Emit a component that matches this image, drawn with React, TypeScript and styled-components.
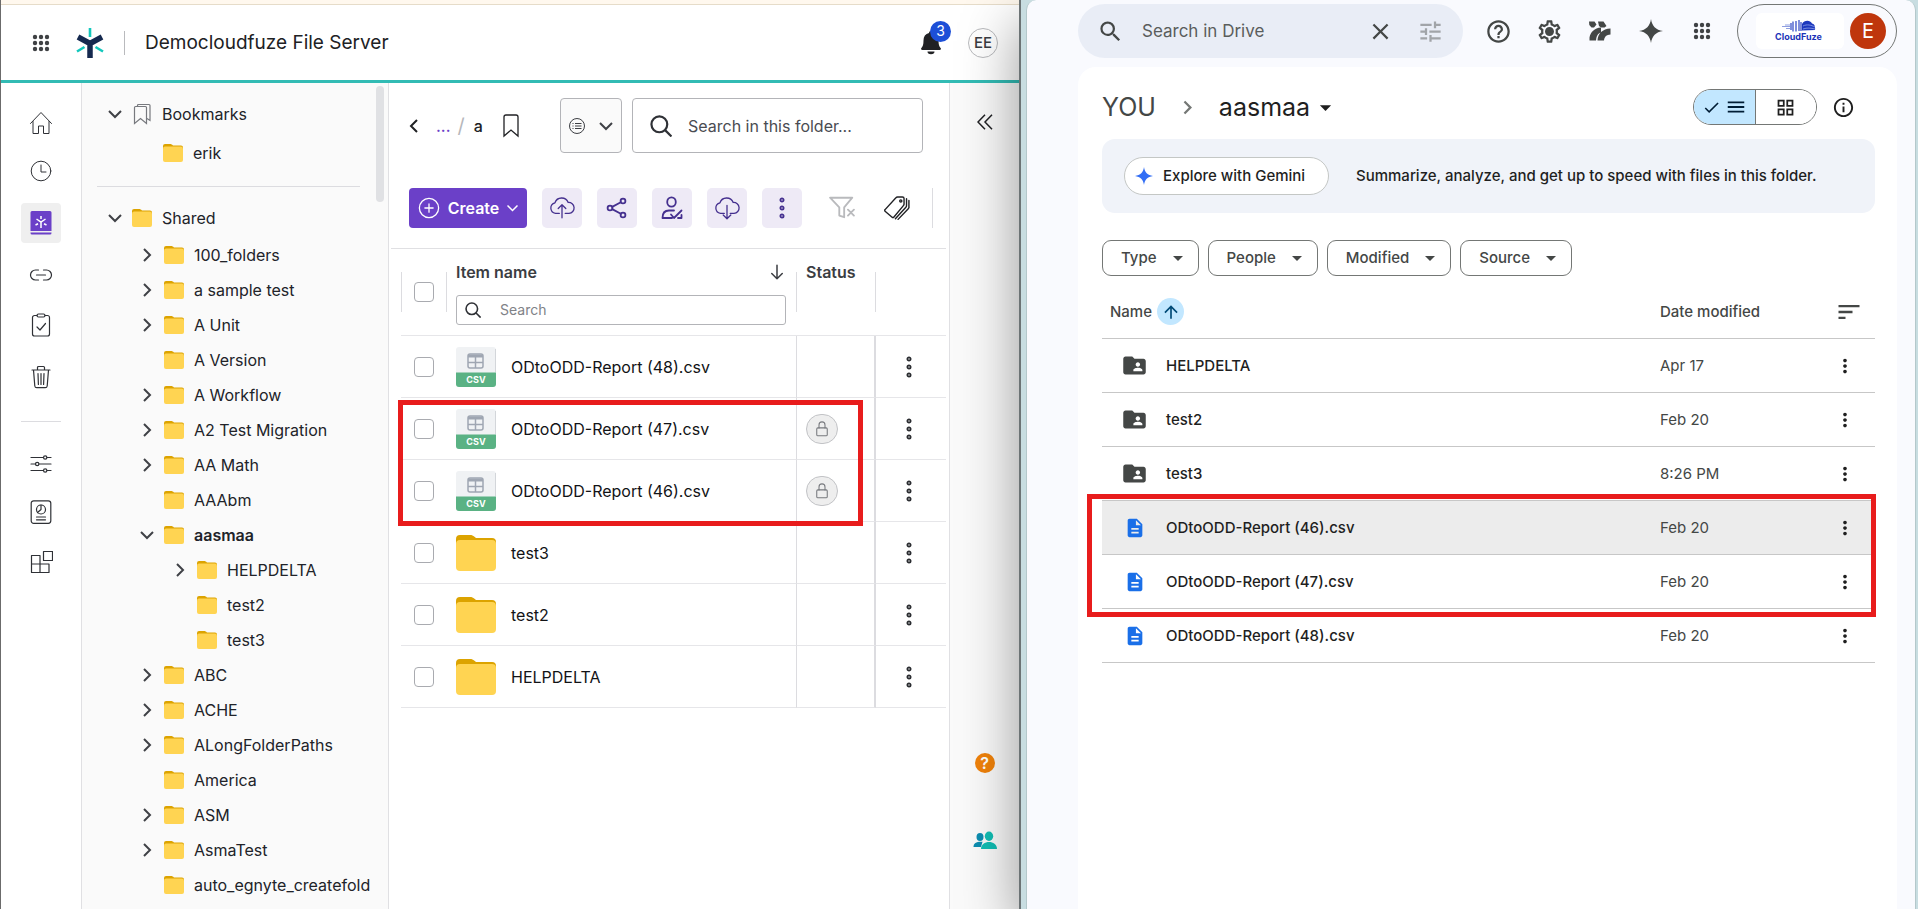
import React from 'react';
import styled, { createGlobalStyle, css } from 'styled-components';
import {
  MdArrowDropDown,
  MdArrowUpward,
  MdCheck,
  MdChevronRight,
  MdClose,
  MdDescription,
  MdFolderShared,
  MdHelpOutline,
  MdInfoOutline,
  MdMenu,
  MdMoreVert,
  MdOutlineGridView,
  MdOutlineSettings,
  MdSearch,
  MdSort,
  MdTune,
} from 'react-icons/md';

const Global = createGlobalStyle`
  * { box-sizing: border-box; }
  body { margin: 0; overflow: hidden; background: #c8dde1; }
  button, input { font: inherit; color: inherit; }
  button { border: 0; padding: 0; background: none; cursor: pointer; }
  h1, h2, p, ul { margin: 0; padding: 0; font-weight: inherit; }
  svg { display: block; flex: none; }
`;

const Desktop = styled.div`
  display: grid;
  grid-template-columns: 1019fr 899fr;
  height: 100vh;
`;

/* ---------- shared parts ---------- */

const IconButton = styled.button<{ $muted?: boolean }>`
  display: grid;
  place-items: center;
  color: ${(p) => (p.$muted ? '#a1a4a8' : 'inherit')};
`;

const Marker = styled.div`
  position: absolute;
  border: 5px solid #e81c1c;
  pointer-events: none;
`;

/* ---------- file server window ---------- */

const ServerWindow = styled.section`
  display: flex;
  flex-direction: column;
  min-width: 0;
  min-height: 0;
  border-left: 1px solid #6b6b6b;
  background: #fff;
  color: #212329;
  font-family: Inter, 'Liberation Sans', sans-serif;
  font-size: 16px;
  line-height: 20px;
`;

const NoticeStrip = styled.div`
  flex: none;
  height: 5px;
  background: #fff8ee;
  border-bottom: 1px solid #e6dcc9;
`;

const ServerHeader = styled.header`
  flex: none;
  display: flex;
  align-items: center;
  height: 78px;
  padding: 0 21px 0 31px;
  border-bottom: 3px solid #32bbb4;
`;

const HeaderRule = styled.span`
  width: 1px;
  height: 24px;
  margin: 0 20px;
  background: #b9babd;
`;

const ServerTitle = styled.h1`
  flex: 1;
  font-size: 19px;
  line-height: 24px;
  font-weight: 400;
  color: #202124;
`;

const LogoLink = styled.a`
  margin-left: 26px;
`;

const BellButton = styled.button`
  position: relative;
  width: 20px;
  height: 24px;
  margin-right: 27px;
`;

const Badge = styled.span`
  position: absolute;
  left: 9px;
  top: -10px;
  width: 21px;
  height: 21px;
  border-radius: 50%;
  background: #1d4fd7;
  color: #fff;
  font-size: 14px;
  line-height: 20px;
  text-align: center;
`;

const UserButton = styled.button`
  width: 30px;
  height: 30px;
  border: 1px solid #b9babd;
  border-radius: 50%;
  font-size: 15px;
  font-weight: 500;
  line-height: 28px;
  color: #3b3d42;
`;

const ServerBody = styled.div`
  flex: 1;
  display: flex;
  min-height: 0;
`;

const Rail = styled.nav`
  flex: none;
  width: 81px;
  padding-top: 17px;
  display: flex;
  flex-direction: column;
  align-items: center;
  border-right: 1px solid #e0e0e3;
`;

const RailSlot = styled.div<{ $h: number }>`
  flex: none;
  height: ${(p) => p.$h}px;
  display: flex;
  align-items: center;
`;

const RailButton = styled.button<{ $active?: boolean }>`
  display: grid;
  place-items: center;
  width: 40px;
  height: 40px;
  border-radius: 4px;
  background: ${(p) => (p.$active ? '#efefef' : 'transparent')};
  color: #2f3136;
`;

const RailRule = styled.span`
  width: 40px;
  height: 1px;
  background: #dcdce0;
`;

const Tree = styled.aside`
  position: relative;
  flex: none;
  width: 307px;
  padding-top: 8px;
  overflow: hidden;
  background: #fafafa;
  border-right: 1px solid #e0e0e3;
`;

const TreeList = styled.ul`
  list-style: none;
`;

const TreeRow = styled.li<{ $indent: number; $h?: number; $bold?: boolean }>`
  display: flex;
  align-items: center;
  height: ${(p) => p.$h ?? 35}px;
  padding-left: ${(p) => p.$indent}px;
  white-space: nowrap;
  font-weight: ${(p) => (p.$bold ? 600 : 400)};
`;

const Toggle = styled.span`
  flex: none;
  display: grid;
  place-items: center;
  width: 26px;
  margin-right: 4px;
`;

const TreeLink = styled.a`
  display: flex;
  align-items: center;
  gap: 10px;
  color: inherit;
  text-decoration: none;
`;

const TreeRule = styled.div`
  height: 1px;
  margin: 17px 28px 12px 15px;
  background: #dcdce0;
`;

const ScrollThumb = styled.span`
  position: absolute;
  right: 4px;
  top: 3px;
  width: 8px;
  height: 116px;
  border-radius: 4px;
  background: #e0e1e4;
`;

const Content = styled.main`
  flex: 1;
  min-width: 0;
  padding: 15px 3px 0 2px;
  background: #fff;
`;

const PathBar = styled.div`
  display: flex;
  align-items: center;
  height: 55px;
  padding: 0 23px 0 18px;
`;

const Crumb = styled.a`
  font-weight: 500;
  color: #202124;
  text-decoration: none;
`;

const MoreCrumb = styled(Crumb)`
  margin-left: 17px;
  color: #6b40c8;
`;

const Slash = styled.span`
  margin: 0 9px 0 7px;
  font-size: 20px;
  color: #b6b7bb;
`;

const BookmarkButton = styled.button`
  margin-left: 20px;
`;

const ScopeButton = styled.button`
  flex: none;
  display: flex;
  align-items: center;
  justify-content: center;
  gap: 14px;
  width: 62px;
  height: 55px;
  margin: 0 10px 0 auto;
  border: 1px solid #b3b4b8;
  border-radius: 4px;
  background: #fafafa;
  color: #3c3e43;
`;

const SearchBox = styled.label<{ $small?: boolean }>`
  display: flex;
  align-items: center;
  min-width: 0;
  border: 1px solid #b3b4b8;
  border-radius: ${(p) => (p.$small ? 3 : 4)}px;
  background: #fff;
  color: #2f3136;
  font-weight: 400;
  ${(p) =>
    p.$small
      ? css`
          height: 30px;
          margin-top: 13px;
          padding-left: 8px;
          gap: 19px;
          font-size: 14px;
        `
      : css`
          flex: 0 1 291px;
          height: 55px;
          padding-left: 17px;
          gap: 16px;
        `}
  input {
    flex: 1;
    width: 0;
    min-width: 0;
    border: 0;
    padding: 0;
    outline: 0;
    background: none;
  }
  input::placeholder {
    color: ${(p) => (p.$small ? '#808287' : '#4a4c52')};
    opacity: 1;
  }
`;

const ToolBar = styled.div`
  display: flex;
  align-items: center;
  gap: 15px;
  margin-top: 35px;
  padding: 0 13px 0 18px;
  height: 40px;
`;

const ToolGroup = styled.div`
  display: flex;
  gap: 15px;
  margin-left: 5px;
`;

const CreateButton = styled.button`
  display: flex;
  align-items: center;
  justify-content: center;
  gap: 8px;
  width: 118px;
  height: 40px;
  border-radius: 4px;
  background: #6b40c8;
  color: #fff;
  font-weight: 600;
`;

const Tile = styled.button<{ $plain?: boolean; $muted?: boolean }>`
  display: grid;
  place-items: center;
  width: 40px;
  height: 40px;
  border-radius: 5px;
  background: ${(p) => (p.$plain ? 'transparent' : '#eeeaf6')};
  color: ${(p) => (p.$muted ? '#b9babd' : p.$plain ? '#202124' : '#45308f')};
`;

const ToolRule = styled.span`
  width: 1px;
  height: 40px;
  margin-left: auto;
  background: #dcdce0;
`;

const TableArea = styled.div`
  position: relative;
  margin-top: 20px;
  border-top: 1px solid #e0e0e3;
  padding-left: 10px;
`;

const ItemTable = styled.table`
  width: 100%;
  table-layout: fixed;
  border-collapse: separate;
  border-spacing: 0;

  th,
  td {
    padding: 0;
    border-bottom: 1px solid #e6e6e9;
    text-align: left;
  }
  th {
    position: relative;
    height: 87px;
    vertical-align: top;
    font-weight: 600;
    color: #3b3d42;
  }
  th:not(:last-child)::after,
  th:first-child::before {
    content: '';
    position: absolute;
    top: 23px;
    right: 0;
    width: 1px;
    height: 40px;
    background: #dcdce0;
  }
  th:first-child::before {
    right: auto;
    left: 0;
  }
  td {
    height: 62px;
    color: #121316;
  }
  td:nth-child(2) {
    border-right: 1px solid #dcdce0;
  }
  td:nth-child(3) {
    border-right: 2px solid #dcdce0;
  }
`;

const Check = styled.input<{ $head?: boolean }>`
  appearance: none;
  display: block;
  width: 20px;
  height: 20px;
  margin: ${(p) => (p.$head ? '33px 0 0 13px' : '0 0 0 13px')};
  border: 1px solid #a9abb0;
  border-radius: 4px;
  background: #fff;
`;

const NameHead = styled.div`
  padding: 13px 11px 0 9px;
`;

const HeadLine = styled.div`
  display: flex;
  align-items: center;
  justify-content: space-between;
`;

const StatusHead = styled.div`
  padding: 13px 0 0 9px;
`;

const ItemName = styled.a`
  display: flex;
  align-items: center;
  gap: 15px;
  padding-left: 9px;
  color: inherit;
  text-decoration: none;
`;

const LockBadge = styled.span`
  display: grid;
  place-items: center;
  width: 32px;
  height: 30px;
  margin-left: 9px;
  border: 1px solid #c2c3c6;
  border-radius: 16px;
  background: #eee;
  color: #77797e;
`;

const RowMenu = styled.button`
  display: grid;
  place-items: center;
  width: 24px;
  height: 32px;
  margin-left: 21px;
  color: #2a2c30;
`;

const ItemMarker = styled(Marker)`
  top: 151px;
  left: 7px;
  right: 83px;
  height: 126px;
`;

const SideRail = styled.aside`
  flex: none;
  display: flex;
  flex-direction: column;
  align-items: center;
  width: 70px;
  padding-top: 31px;
  overflow: hidden;
  background: #fafafa;
  border-left: 1px solid #e0e0e3;
`;

const SideTools = styled.div`
  display: flex;
  flex-direction: column;
  align-items: center;
  gap: 58px;
  margin: auto 0 -20px;
`;

const HelpButton = styled.button`
  width: 20px;
  height: 20px;
  border-radius: 50%;
  background: #f0820a;
  color: #fff;
  font-size: 16px;
  font-weight: 600;
  line-height: 20px;
`;

/* ---------- drive window ---------- */

const DriveFrame = styled.section`
  position: relative;
  min-width: 0;
  min-height: 0;
  display: flex;
  padding: 0 2px 0 5px;
  border-left: 2px solid #6c7375;
  background: #c8dde1;
  box-shadow: 0 22px 54px rgba(0, 0, 0, 0.4);
`;

const DriveWindow = styled.div`
  flex: 1;
  min-width: 0;
  display: flex;
  flex-direction: column;
  padding: 4px 18px 0 51px;
  border: 1px solid #b4c8cb;
  border-width: 0 1px;
  border-radius: 10px 10px 0 0;
  background: #f9fafe;
  color: #1f1f1f;
  font-family: Inter, 'Open Sans', sans-serif;
  font-size: 15px;
  line-height: 24px;
`;

const DriveHeader = styled.header`
  flex: none;
  display: flex;
  align-items: center;
  height: 54px;
  color: #444746;
`;

const DriveSearch = styled.label`
  flex: 0 1 385px;
  min-width: 0;
  display: flex;
  align-items: center;
  height: 54px;
  padding: 0 19px;
  border-radius: 27px;
  background: #e9edf6;
  font-size: 17px;
  color: #444746;

  input {
    flex: 1;
    min-width: 0;
    padding: 0;
    margin-left: 18px;
    border: 0;
    outline: 0;
    background: none;
  }
  input::placeholder {
    color: #5a5d5c;
    opacity: 1;
  }
`;

const SearchActions = styled.span`
  display: flex;
  gap: 23px;
`;

const HeaderIcons = styled.div`
  display: grid;
  grid-template-columns: repeat(5, 27px);
  align-items: center;
  gap: 24px;
  margin: 0 auto;
`;

const AccountPill = styled.button`
  flex: none;
  display: flex;
  align-items: center;
  justify-content: flex-end;
  gap: 6px;
  width: 160px;
  height: 54px;
  padding-right: 10px;
  border: 1px solid #747775;
  border-radius: 27px;
`;

const OrgTile = styled.span`
  display: flex;
  flex-direction: column;
  align-items: center;
  width: 88px;
  height: 36px;
  padding-top: 7px;
  padding-right: 3px;
  border-radius: 6px;
  background: #fff;
  color: #1a33b8;
  font-size: 9px;
  line-height: 10px;
  font-weight: 700;
`;

const Avatar = styled.span`
  width: 36px;
  height: 36px;
  border-radius: 50%;
  background: #bf360c;
  color: #fff;
  font-size: 20px;
  line-height: 36px;
`;

const Panel = styled.main`
  flex: 1;
  min-height: 0;
  margin-top: 9px;
  padding: 20px 22px 0 24px;
  border-radius: 18px 18px 0 0;
  background: #fff;
`;

const PanelTop = styled.div`
  display: flex;
  align-items: center;
  height: 40px;
`;

const Trail = styled.h2`
  flex: 1;
  display: flex;
  align-items: center;
  font-size: 25px;
  line-height: 36px;
  color: #444746;

  a {
    color: inherit;
    text-decoration: none;
  }
`;

const TrailArrow = styled.span`
  margin: 0 18px;
  color: #747775;
`;

const Current = styled.button`
  display: flex;
  align-items: center;
  gap: 2px;
  color: #1f1f1f;
`;

const ViewSwitch = styled.div`
  display: flex;
  width: 124px;
  height: 36px;
  margin-right: 15px;
  border: 1px solid #747775;
  border-radius: 18px;
  overflow: hidden;
`;

const ViewButton = styled.button<{ $on?: boolean }>`
  flex: 1;
  display: flex;
  align-items: center;
  justify-content: center;
  gap: 4px;
  background: ${(p) => (p.$on ? '#c2e7ff' : '#fff')};
  color: ${(p) => (p.$on ? '#001d35' : '#1f1f1f')};
  border-right: ${(p) => (p.$on ? '1px solid #747775' : '0')};
`;

const InfoButton = styled(IconButton)`
  margin-right: 20px;
  color: #1f1f1f;
`;

const Banner = styled.div`
  display: flex;
  align-items: center;
  gap: 27px;
  height: 74px;
  margin-top: 12px;
  padding-left: 22px;
  border-radius: 13px;
  background: #f0f3f9;
  font-weight: 500;
  white-space: nowrap;
`;

const GeminiButton = styled.button`
  display: flex;
  align-items: center;
  gap: 10px;
  width: 205px;
  height: 38px;
  padding-left: 10px;
  border: 1px solid #c4c7c5;
  border-radius: 19px;
  background: #fff;
`;

const Chips = styled.div`
  display: flex;
  gap: 9px;
  margin-top: 27px;
`;

const Chip = styled.button`
  display: flex;
  align-items: center;
  gap: 9px;
  height: 36px;
  padding: 0 8px 0 18px;
  border: 1px solid #747775;
  border-radius: 9px;
  color: #444746;
  font-weight: 500;
`;

const ListArea = styled.div`
  position: relative;
  margin-top: 9px;
`;

const DriveTable = styled.table`
  width: 100%;
  table-layout: fixed;
  border-collapse: separate;
  border-spacing: 0;

  th,
  td {
    height: 54px;
    padding: 0;
    border-bottom: 1px solid #c7c7c7;
    text-align: left;
    font-weight: 400;
    color: #444746;
  }
  th {
    font-weight: 500;
  }
`;

const DriveRow = styled.tr<{ $hover?: boolean }>`
  background: ${(p) => (p.$hover ? '#ececec' : 'transparent')};
`;

const SortName = styled.button`
  display: flex;
  align-items: center;
  gap: 5px;
  padding-left: 8px;
  font-weight: 500;
`;

const SortDot = styled.span`
  display: grid;
  place-items: center;
  width: 27px;
  height: 27px;
  border-radius: 50%;
  background: #c2e7ff;
  color: #004a77;
`;

const DriveName = styled.a`
  display: flex;
  align-items: center;
  gap: 18px;
  padding-left: 19px;
  color: #1f1f1f;
  font-weight: 500;
  text-decoration: none;
`;

const FileSlot = styled.span<{ $doc?: boolean }>`
  display: grid;
  place-items: center;
  width: 27px;
  color: ${(p) => (p.$doc ? '#1a6fe8' : '#444746')};
`;

const EndButton = styled(IconButton)`
  width: 27px;
  margin-left: 14px;
  color: #1f1f1f;
`;

const SortButton = styled(EndButton)`
  margin-left: 18px;
  color: #444746;
`;

const FileMarker = styled(Marker)`
  top: 209px;
  left: -15px;
  right: -1px;
  height: 123px;
`;

/* ---------- drawings ---------- */

type StrokeProps = { size?: number; w?: number; children: React.ReactNode };

const Stroke = ({ size = 24, w = 1, children }: StrokeProps) => (
  <svg
    width={size}
    height={size}
    viewBox="0 0 24 24"
    fill="none"
    stroke="currentColor"
    strokeWidth={w}
    strokeLinecap="round"
    strokeLinejoin="round"
    aria-hidden
  >
    {children}
  </svg>
);

const Chevron = ({ open }: { open: boolean }) => (
  <svg width="14" height="14" viewBox="0 0 14 14" fill="none" stroke="#3f4146" strokeWidth="2" aria-hidden>
    <path d={open ? 'M1 4l6 6 6-6' : 'M4 1l6 6-6 6'} />
  </svg>
);

const FolderIcon = ({ width, height }: { width: number; height: number }) => (
  <svg width={width} height={height} viewBox="0 0 40 36" preserveAspectRatio="none" aria-hidden>
    <path d="M0 4a4 4 0 0 1 4-4h10c2 0 3 .6 4.500 1.700L20 3h16a4 4 0 0 1 4 4v10H0z" fill="#dca300" />
    <path d="M0 9a4 4 0 0 1 4-4h32a4 4 0 0 1 4 4v23a4 4 0 0 1-4 4H4a4 4 0 0 1-4-4z" fill="#ffd452" />
  </svg>
);

const CsvIcon = () => (
  <svg width="40" height="40" viewBox="0 0 40 40" aria-hidden>
    <rect width="40" height="40" rx="3" fill="#f0f2f4" />
    <path d="M39.500 2v23" stroke="#d3d6da" />
    <path d="M0 25.500h40V37a3 3 0 0 1-3 3H3a3 3 0 0 1-3-3z" fill="#5ab284" />
    <rect x="12" y="7" width="15" height="14" rx="2" fill="none" stroke="#9fa6b2" strokeWidth="1.500" />
    <path d="M12 7.500h15v3H12z" fill="#9fa6b2" />
    <path d="M12 15.500h15M19.500 10v11" stroke="#9fa6b2" strokeWidth="1.500" />
    <text x="20" y="36" textAnchor="middle" fill="#fff" fontFamily="Inter, sans-serif" fontSize="9" fontWeight="700">
      CSV
    </text>
  </svg>
);

const Dots9 = () => (
  <svg width="18" height="18" viewBox="0 0 18 18" fill="#3f4144" aria-hidden>
    {[3, 9, 15].map((y) => [3, 9, 15].map((x) => <circle key={`${x}-${y}`} cx={x} cy={y} r="2.200" />))}
  </svg>
);

const Rings = () => (
  <svg width="8" height="24" viewBox="0 0 8 24" fill="none" stroke="currentColor" strokeWidth="1.800" aria-hidden>
    {[4, 12, 20].map((y) => (
      <circle key={y} cx="4" cy={y} r="1.600" />
    ))}
  </svg>
);

const Logo = () => (
  <svg width="28" height="32" viewBox="0 0 28 32" fill="none" aria-hidden>
    <path d="M2 10l12 6.500L26 10M14 15v16" stroke="#15294f" strokeWidth="5.500" />
    <path d="M14 1v9M1 24.500l7.500-4.500M27 24.500l-7.500-4.500" stroke="#14c8bd" strokeWidth="2.600" />
  </svg>
);

const Bell = () => (
  <svg width="20" height="24" viewBox="0 0 20 24" fill="#202124" aria-hidden>
    <path d="M10 0c1.200 0 2 .8 2 2 3.600.8 5.500 3.500 5.500 7.500 0 4 .7 6 2.100 7.400.7.800.4 2.100-.8 2.100H1.200c-1.200 0-1.500-1.300-.8-2.100C1.800 15.500 2.500 13.500 2.500 9.500 2.500 5.500 4.400 2.800 8 2c0-1.200.8-2 2-2zM6.500 20.500h7a3.500 2.800 0 0 1-7 0z" />
  </svg>
);

const FilesIcon = () => (
  <svg width="22" height="24" viewBox="0 0 22 24" aria-hidden>
    <path d="M2 0h18a1.500 1.500 0 0 1 1.500 1.500V20H.5V1.500A1.500 1.500 0 0 1 2 0zM.5 21.500h21V22a1.500 1.500 0 0 1-1.500 1.500H2A1.500 1.500 0 0 1 .5 22z" fill="#6b40c8" />
    <path d="M6.500 8l4.500 3 4.500-3M11 11v6M11 5v3M5.500 14l2.500-1.200M16.500 14L14 12.800" stroke="#fff" strokeWidth="1.500" fill="none" />
  </svg>
);

const Magnifier = ({ size }: { size: number }) => (
  <svg width={size} height={size} viewBox="0 0 20 20" fill="none" stroke="currentColor" strokeWidth="2" aria-hidden>
    <circle cx="8.500" cy="8.500" r="7.200" />
    <path d="M13.500 13.500l6 6" />
  </svg>
);

const Cloud = ({ up }: { up: boolean }) => (
  <Stroke size={26} w={1.2}>
    <path d="M9.500 17H6a5 5 0 0 1-.5-9.800 6.500 6.500 0 0 1 12.200-.3A5 5 0 0 1 18.500 17H15" />
    <path d={up ? 'M12 21V9.500M8.500 12.500L12 9l3.500 3.500' : 'M12 9.500V21.500M8.500 18.500l3.500 3.500 3.500-3.500'} />
  </Stroke>
);

const Spark = ({ size, color }: { size: number; color: string }) => (
  <svg width={size} height={size} viewBox="0 0 24 24" fill={color} aria-hidden>
    <path d="M12 0c.9 6.800 4.800 11 12 12-7.200 1-11.100 5.200-12 12-.9-6.800-4.800-11-12-12C7.200 11 11.100 6.800 12 0z" />
  </svg>
);

const StudioIcon = () => (
  <svg width="22" height="20" viewBox="0 0 22 20" fill="#444746" aria-hidden>
    <path d="M0 .5h5.500l2 3L5 6.500H2.500L.3 4zM9 .5h5.500l3 4.500-2 1.500H12L10 5z" />
    <path d="M.5 19.500v-3C1.500 11 5.500 7 12 6.500v5c-3 .8-4.500 3-5 8zM8.500 19.500c.3-7 5-11.500 13-12v6c-4 .2-6 2-6.500 6z" />
  </svg>
);

const CloudMark = () => (
  <svg width="34" height="12" viewBox="0 0 34 12" aria-hidden>
    <path d="M0 6.500h8M3 5h5M4 8.500h4" stroke="#8f9fe0" />
    <path d="M9 3v7M11 1.500v10M14 1v10.500M17 0v11M19 2v9" stroke="#2a43c4" strokeWidth="1.200" />
    <path d="M20 10.500V4c2-4 8-4.500 10-.5 2.500.5 3.500 3 3 6.500z" fill="#1d38bd" />
    <path d="M21 6c4-2 8-1 12 1M21 9c4-1.500 8-1 12 0" stroke="#9fb0f0" strokeWidth=".7" fill="none" />
  </svg>
);

/* ---------- data ---------- */

type RailItem = { label: string; h: number; active?: boolean; icon: React.ReactNode };

const railItems: RailItem[] = [
  {
    label: 'Home',
    h: 46,
    icon: (
      <Stroke>
        <path d="M1.500 12.500L12 1.500l10.500 11M4 10.500V22.500h5.500V15h5v7.500H20V10.500" />
      </Stroke>
    ),
  },
  {
    label: 'Recent',
    h: 50,
    icon: (
      <Stroke>
        <circle cx="12" cy="12" r="9.800" />
        <path d="M12 6v7h5" />
      </Stroke>
    ),
  },
  { label: 'Files', h: 54, active: true, icon: <FilesIcon /> },
  {
    label: 'Links',
    h: 50,
    icon: (
      <Stroke w={1.2}>
        <path d="M9.500 7H6.500a5 5 0 0 0 0 10h3M14.500 7h3a5 5 0 0 1 0 10h-3M7.500 12h9" />
      </Stroke>
    ),
  },
  {
    label: 'Tasks',
    h: 50,
    icon: (
      <Stroke w={1.2}>
        <path d="M8 2.500H5.500a2 2 0 0 0-2 2V21a2 2 0 0 0 2 2h13a2 2 0 0 0 2-2V4.500a2 2 0 0 0-2-2H16" />
        <rect x="8" y="1" width="8" height="3" rx="1.500" />
        <path d="M8 14l3 3 5.500-6.500" />
      </Stroke>
    ),
  },
  {
    label: 'Trash',
    h: 54,
    icon: (
      <Stroke w={1.2}>
        <path d="M3 5h18M8.500 5V2.500a1 1 0 0 1 1-1h5a1 1 0 0 1 1 1V5M4.500 5l1.300 16a2 2 0 0 0 2 1.700h8.400a2 2 0 0 0 2-1.700L19.500 5M9 8.500l.4 11M12 8.500v11M15 8.500l-.4 11" />
      </Stroke>
    ),
  },
];

const railTail: RailItem[] = [
  {
    label: 'Settings',
    h: 52,
    icon: (
      <Stroke w={1.2}>
        <path d="M2 5.500h12.500M18 5.500h4M2 12h4.500M10 12h12M2 18.500h12.500M18 18.500h4" />
        <circle cx="16.200" cy="5.500" r="1.700" />
        <circle cx="8.200" cy="12" r="1.700" />
        <circle cx="16.200" cy="18.500" r="1.700" />
      </Stroke>
    ),
  },
  {
    label: 'Reports',
    h: 44,
    icon: (
      <Stroke w={1.2}>
        <rect x="2.200" y=".8" width="19.600" height="22.500" rx="2.500" />
        <circle cx="12" cy="9.500" r="4.500" />
        <path d="M12 5v4.500l-3.500 3M7.500 17h9M7.500 19.800h9" />
      </Stroke>
    ),
  },
  {
    label: 'Apps',
    h: 56,
    icon: (
      <Stroke w={1.2}>
        <path d="M2.500 5.500h8.500v17H2.500zM2.500 14H20v8.500h-9" />
        <rect x="14.500" y="1.500" width="9" height="9" />
      </Stroke>
    ),
  },
];

type TreeNode = { name: string; level: number; open?: boolean; leaf?: boolean };

const nodes: TreeNode[] = [
  { name: '100_folders', level: 1 },
  { name: 'a sample test', level: 1 },
  { name: 'A Unit', level: 1 },
  { name: 'A Version', level: 1, leaf: true },
  { name: 'A Workflow', level: 1 },
  { name: 'A2 Test Migration', level: 1 },
  { name: 'AA Math', level: 1 },
  { name: 'AAAbm', level: 1, leaf: true },
  { name: 'aasmaa', level: 1, open: true },
  { name: 'HELPDELTA', level: 2 },
  { name: 'test2', level: 2, leaf: true },
  { name: 'test3', level: 2, leaf: true },
  { name: 'ABC', level: 1 },
  { name: 'ACHE', level: 1 },
  { name: 'ALongFolderPaths', level: 1 },
  { name: 'America', level: 1, leaf: true },
  { name: 'ASM', level: 1 },
  { name: 'AsmaTest', level: 1 },
  { name: 'auto_egnyte_createfold', level: 1, leaf: true },
];

const items = [
  { name: 'ODtoODD-Report (48).csv', csv: true, locked: false },
  { name: 'ODtoODD-Report (47).csv', csv: true, locked: true },
  { name: 'ODtoODD-Report (46).csv', csv: true, locked: true },
  { name: 'test3', csv: false, locked: false },
  { name: 'test2', csv: false, locked: false },
  { name: 'HELPDELTA', csv: false, locked: false },
];

const driveItems = [
  { name: 'HELPDELTA', date: 'Apr 17', doc: false },
  { name: 'test2', date: 'Feb 20', doc: false },
  { name: 'test3', date: '8:26 PM', doc: false },
  { name: 'ODtoODD-Report (46).csv', date: 'Feb 20', doc: true, hover: true },
  { name: 'ODtoODD-Report (47).csv', date: 'Feb 20', doc: true },
  { name: 'ODtoODD-Report (48).csv', date: 'Feb 20', doc: true },
];

/* ---------- file server ---------- */

const FolderTree = () => (
  <Tree aria-label="Folders">
    <TreeList>
      <TreeRow $indent={20} $h={46}>
        <Toggle>
          <Chevron open />
        </Toggle>
        <TreeLink href="#bookmarks">
          <svg width="20" height="22" viewBox="0 0 20 22" fill="none" stroke="#77797e" strokeWidth="1.200" aria-hidden>
            <path d="M2.500 20.500V4.500a1 1 0 0 1 1-1h10a1 1 0 0 1 1 1v16l-6-5z" />
            <path d="M5.500 3.500v-1a1 1 0 0 1 1-1H17a1 1 0 0 1 1 1v15l-3-2" />
          </svg>
          Bookmarks
        </TreeLink>
      </TreeRow>
      <TreeRow $indent={81} $h={32}>
        <TreeLink href="#erik">
          <FolderIcon width={20} height={18} />
          erik
        </TreeLink>
      </TreeRow>
    </TreeList>
    <TreeRule />
    <TreeList>
      <TreeRow $indent={20} $h={38}>
        <Toggle>
          <Chevron open />
        </Toggle>
        <TreeLink href="#shared">
          <FolderIcon width={20} height={18} />
          Shared
        </TreeLink>
      </TreeRow>
      {nodes.map((n) => (
        <TreeRow key={n.name} $indent={n.level === 1 ? 52 : 85} $bold={n.open}>
          <Toggle>{!n.leaf && <Chevron open={!!n.open} />}</Toggle>
          <TreeLink href={`#${n.name}`}>
            <FolderIcon width={20} height={18} />
            {n.name}
          </TreeLink>
        </TreeRow>
      ))}
    </TreeList>
    <ScrollThumb />
  </Tree>
);

const ItemList = () => (
  <TableArea>
    <ItemTable>
      <colgroup>
        <col width="46" />
        <col />
        <col width="79" />
        <col width="70" />
      </colgroup>
      <thead>
        <tr>
          <th>
            <Check type="checkbox" $head aria-label="Select all" />
          </th>
          <th>
            <NameHead>
              <HeadLine>
                Item name
                <Stroke size={18} w={2}>
                  <path d="M12 3v18M5 14l7 7 7-7" />
                </Stroke>
              </HeadLine>
              <SearchBox $small>
                <Magnifier size={16} />
                <input type="text" placeholder="Search" aria-label="Search" />
              </SearchBox>
            </NameHead>
          </th>
          <th>
            <StatusHead>Status</StatusHead>
          </th>
          <th aria-label="Actions" />
        </tr>
      </thead>
      <tbody>
        {items.map((it) => (
          <tr key={it.name}>
            <td>
              <Check type="checkbox" aria-label={it.name} />
            </td>
            <td>
              <ItemName href="#item">
                {it.csv ? <CsvIcon /> : <FolderIcon width={40} height={36} />}
                {it.name}
              </ItemName>
            </td>
            <td>
              {it.locked && (
                <LockBadge>
                  <Stroke size={18} w={1.4}>
                    <rect x="5" y="10.500" width="14" height="10.500" rx="1.500" />
                    <path d="M8 10.500V6.500a4 4 0 0 1 8 0v4" />
                  </Stroke>
                </LockBadge>
              )}
            </td>
            <td>
              <RowMenu aria-label="More actions">
                <Rings />
              </RowMenu>
            </td>
          </tr>
        ))}
      </tbody>
    </ItemTable>
    <ItemMarker />
  </TableArea>
);

const FileServer = () => (
  <ServerWindow>
    <NoticeStrip />
    <ServerHeader>
      <IconButton aria-label="Applications">
        <Dots9 />
      </IconButton>
      <LogoLink href="#home" aria-label="Home">
        <Logo />
      </LogoLink>
      <HeaderRule />
      <ServerTitle>Democloudfuze File Server</ServerTitle>
      <BellButton aria-label="Notifications">
        <Bell />
        <Badge>3</Badge>
      </BellButton>
      <UserButton>EE</UserButton>
    </ServerHeader>
    <ServerBody>
      <Rail aria-label="Main">
        {railItems.map((r) => (
          <RailSlot key={r.label} $h={r.h}>
            <RailButton $active={r.active} aria-label={r.label}>
              {r.icon}
            </RailButton>
          </RailSlot>
        ))}
        <RailSlot $h={34}>
          <RailRule />
        </RailSlot>
        {railTail.map((r) => (
          <RailSlot key={r.label} $h={r.h}>
            <RailButton aria-label={r.label}>{r.icon}</RailButton>
          </RailSlot>
        ))}
      </Rail>
      <FolderTree />
      <Content>
        <PathBar>
          <IconButton aria-label="Back">
            <svg width="10" height="14" viewBox="0 0 10 14" fill="none" stroke="#202124" strokeWidth="2" aria-hidden>
              <path d="M8 1L2 7l6 6" />
            </svg>
          </IconButton>
          <MoreCrumb href="#parents">...</MoreCrumb>
          <Slash>/</Slash>
          <Crumb href="#aasmaa">a</Crumb>
          <BookmarkButton aria-label="Bookmark">
            <svg width="16" height="24" viewBox="0 0 16 24" fill="none" stroke="#202124" strokeWidth="1.300" aria-hidden>
              <path d="M1 22V3a2 2 0 0 1 2-2h10a2 2 0 0 1 2 2v19l-7-6z" />
            </svg>
          </BookmarkButton>
          <ScopeButton aria-label="Search scope">
            <svg width="16" height="16" viewBox="0 0 16 16" fill="none" stroke="currentColor" aria-hidden>
              <circle cx="8" cy="8" r="7.500" />
              <path d="M3.500 5.500h1M3.500 8h1M3.500 10.500h1M6 5.500h6.500M6 8h6.500M6 10.500h6.500" />
            </svg>
            <Chevron open />
          </ScopeButton>
          <SearchBox>
            <Magnifier size={22} />
            <input type="text" placeholder="Search in this folder..." aria-label="Search in this folder" />
          </SearchBox>
        </PathBar>
        <ToolBar>
          <CreateButton>
            <Stroke size={22} w={1.4}>
              <circle cx="12" cy="12" r="10.500" />
              <path d="M12 7.500v9M7.500 12h9" />
            </Stroke>
            Create
            <svg width="11" height="8" viewBox="0 0 11 8" fill="none" stroke="#fff" strokeWidth="1.500" aria-hidden>
              <path d="M.5 1.500l5 5 5-5" />
            </svg>
          </CreateButton>
          <Tile aria-label="Upload">
            <Cloud up />
          </Tile>
          <Tile aria-label="Share">
            <Stroke w={1.8}>
              <circle cx="5" cy="12" r="2.400" />
              <circle cx="18" cy="5" r="2.400" />
              <circle cx="18" cy="19" r="2.400" />
              <path d="M7.200 10.900l8.600-4.700M7.200 13.100l8.600 4.700" />
            </Stroke>
          </Tile>
          <Tile aria-label="Permissions">
            <Stroke w={1.8}>
              <ellipse cx="11.500" cy="6" rx="4.300" ry="4.700" />
              <path d="M12 22H2.500c0-5 2.500-7.500 6.500-7.500h5M11 18.500l3 3.500 7.500-7.500M21.500 19v3H18" />
            </Stroke>
          </Tile>
          <Tile aria-label="Download">
            <Cloud up={false} />
          </Tile>
          <Tile aria-label="More">
            <Rings />
          </Tile>
          <ToolGroup>
            <Tile $plain $muted aria-label="Clear filters">
              <Stroke size={26} w={1.7}>
                <path d="M1 2.500h20.500l-7.500 9V20.500L9.500 19v-7.500z" />
                <path d="M17.500 13.500l5.500 5.500M23 13.500L17.500 19" />
              </Stroke>
            </Tile>
            <Tile $plain aria-label="Tags">
              <Stroke size={26} w={1.3}>
                <path d="M1 13.500L11 2.500a2 2 0 0 1 1.500-.7H17a1.500 1.500 0 0 1 1.500 1.500v5a2 2 0 0 1-.6 1.500L9 20.500a1 1 0 0 1-1.500 0L1 15a1 1 0 0 1 0-1.500z" />
                <path d="M20.800 3.500v6.300a2 2 0 0 1-.6 1.500L10.500 22M23 5v6.200a2 2 0 0 1-.6 1.500L13 22.500" />
                <circle cx="15.500" cy="5.500" r="1" />
              </Stroke>
            </Tile>
          </ToolGroup>
          <ToolRule />
        </ToolBar>
        <ItemList />
      </Content>
      <SideRail>
        <IconButton aria-label="Collapse">
          <svg width="16" height="16" viewBox="0 0 16 16" fill="none" stroke="#202124" strokeWidth="1.500" aria-hidden>
            <path d="M8 .7L1 8l7 7.300M15 .7L8 8l7 7.300" />
          </svg>
        </IconButton>
        <SideTools>
          <HelpButton aria-label="Help">?</HelpButton>
          <IconButton aria-label="Community">
            <svg width="24" height="20" viewBox="0 0 24 20" aria-hidden>
              <g fill="#0c8db0">
                <ellipse cx="7" cy="6" rx="3.500" ry="4" />
                <path d="M.5 16c0-4 3-5.500 9-5.200L8 16z" />
              </g>
              <g fill="#12bdb3">
                <ellipse cx="16" cy="5.200" rx="4.200" ry="4.700" />
                <path d="M8 18c0-9.300 16-9.300 16 0z" />
              </g>
            </svg>
          </IconButton>
          <IconButton aria-label="Assistant">
            <Spark size={20} color="#5f86e8" />
          </IconButton>
        </SideTools>
      </SideRail>
    </ServerBody>
  </ServerWindow>
);

/* ---------- drive ---------- */

const Drive = () => (
  <DriveFrame>
    <DriveWindow>
      <DriveHeader>
        <DriveSearch>
          <MdSearch size={27} />
          <input type="text" placeholder="Search in Drive" aria-label="Search in Drive" />
          <SearchActions>
            <IconButton aria-label="Clear search">
              <MdClose size={27} />
            </IconButton>
            <IconButton $muted aria-label="Advanced search">
              <MdTune size={27} />
            </IconButton>
          </SearchActions>
        </DriveSearch>
        <HeaderIcons>
          <IconButton aria-label="Support">
            <MdHelpOutline size={27} />
          </IconButton>
          <IconButton aria-label="Settings">
            <svg width="27" height="27" viewBox="0 0 24 24" fill="#444746" aria-hidden>
              <MdOutlineSettings size={24} />
              <circle cx="12" cy="12" r="3" />
            </svg>
          </IconButton>
          <IconButton aria-label="Studio">
            <StudioIcon />
          </IconButton>
          <IconButton aria-label="Ask Gemini">
            <Spark size={24} color="#444746" />
          </IconButton>
          <IconButton aria-label="Google apps">
            <Dots9 />
          </IconButton>
        </HeaderIcons>
        <AccountPill aria-label="Account">
          <OrgTile>
            <CloudMark />
            CloudFuze
          </OrgTile>
          <Avatar>E</Avatar>
        </AccountPill>
      </DriveHeader>
      <Panel>
        <PanelTop>
          <Trail>
            <a href="#you">YOU</a>
            <TrailArrow>
              <MdChevronRight size={27} />
            </TrailArrow>
            <Current>
              aasmaa
              <MdArrowDropDown size={27} />
            </Current>
          </Trail>
          <ViewSwitch>
            <ViewButton $on aria-label="List view">
              <MdCheck size={19} />
              <MdMenu size={22} />
            </ViewButton>
            <ViewButton aria-label="Grid view">
              <MdOutlineGridView size={21} />
            </ViewButton>
          </ViewSwitch>
          <InfoButton aria-label="View details">
            <MdInfoOutline size={23} />
          </InfoButton>
        </PanelTop>
        <Banner>
          <GeminiButton>
            <Spark size={18} color="#326ef5" />
            Explore with Gemini
          </GeminiButton>
          <p>Summarize, analyze, and get up to speed with files in this folder.</p>
        </Banner>
        <Chips>
          {['Type', 'People', 'Modified', 'Source'].map((c) => (
            <Chip key={c} aria-haspopup="menu">
              {c}
              <MdArrowDropDown size={24} />
            </Chip>
          ))}
        </Chips>
        <ListArea>
          <DriveTable>
            <colgroup>
              <col />
              <col width="157" />
              <col width="58" />
            </colgroup>
            <thead>
              <tr>
                <th>
                  <SortName>
                    Name
                    <SortDot>
                      <MdArrowUpward size={20} />
                    </SortDot>
                  </SortName>
                </th>
                <th>Date modified</th>
                <th>
                  <SortButton aria-label="Sort">
                    <MdSort size={28} />
                  </SortButton>
                </th>
              </tr>
            </thead>
            <tbody>
              {driveItems.map((d) => (
                <DriveRow key={d.name} $hover={d.hover}>
                  <td>
                    <DriveName href="#file">
                      <FileSlot $doc={d.doc}>
                        {d.doc ? <MdDescription size={22} /> : <MdFolderShared size={27} />}
                      </FileSlot>
                      {d.name}
                    </DriveName>
                  </td>
                  <td>{d.date}</td>
                  <td>
                    <EndButton aria-label="More actions">
                      <MdMoreVert size={22} />
                    </EndButton>
                  </td>
                </DriveRow>
              ))}
            </tbody>
          </DriveTable>
          <FileMarker />
        </ListArea>
      </Panel>
    </DriveWindow>
  </DriveFrame>
);

export default function App() {
  return (
    <Desktop>
      <Global />
      <FileServer />
      <Drive />
    </Desktop>
  );
}
